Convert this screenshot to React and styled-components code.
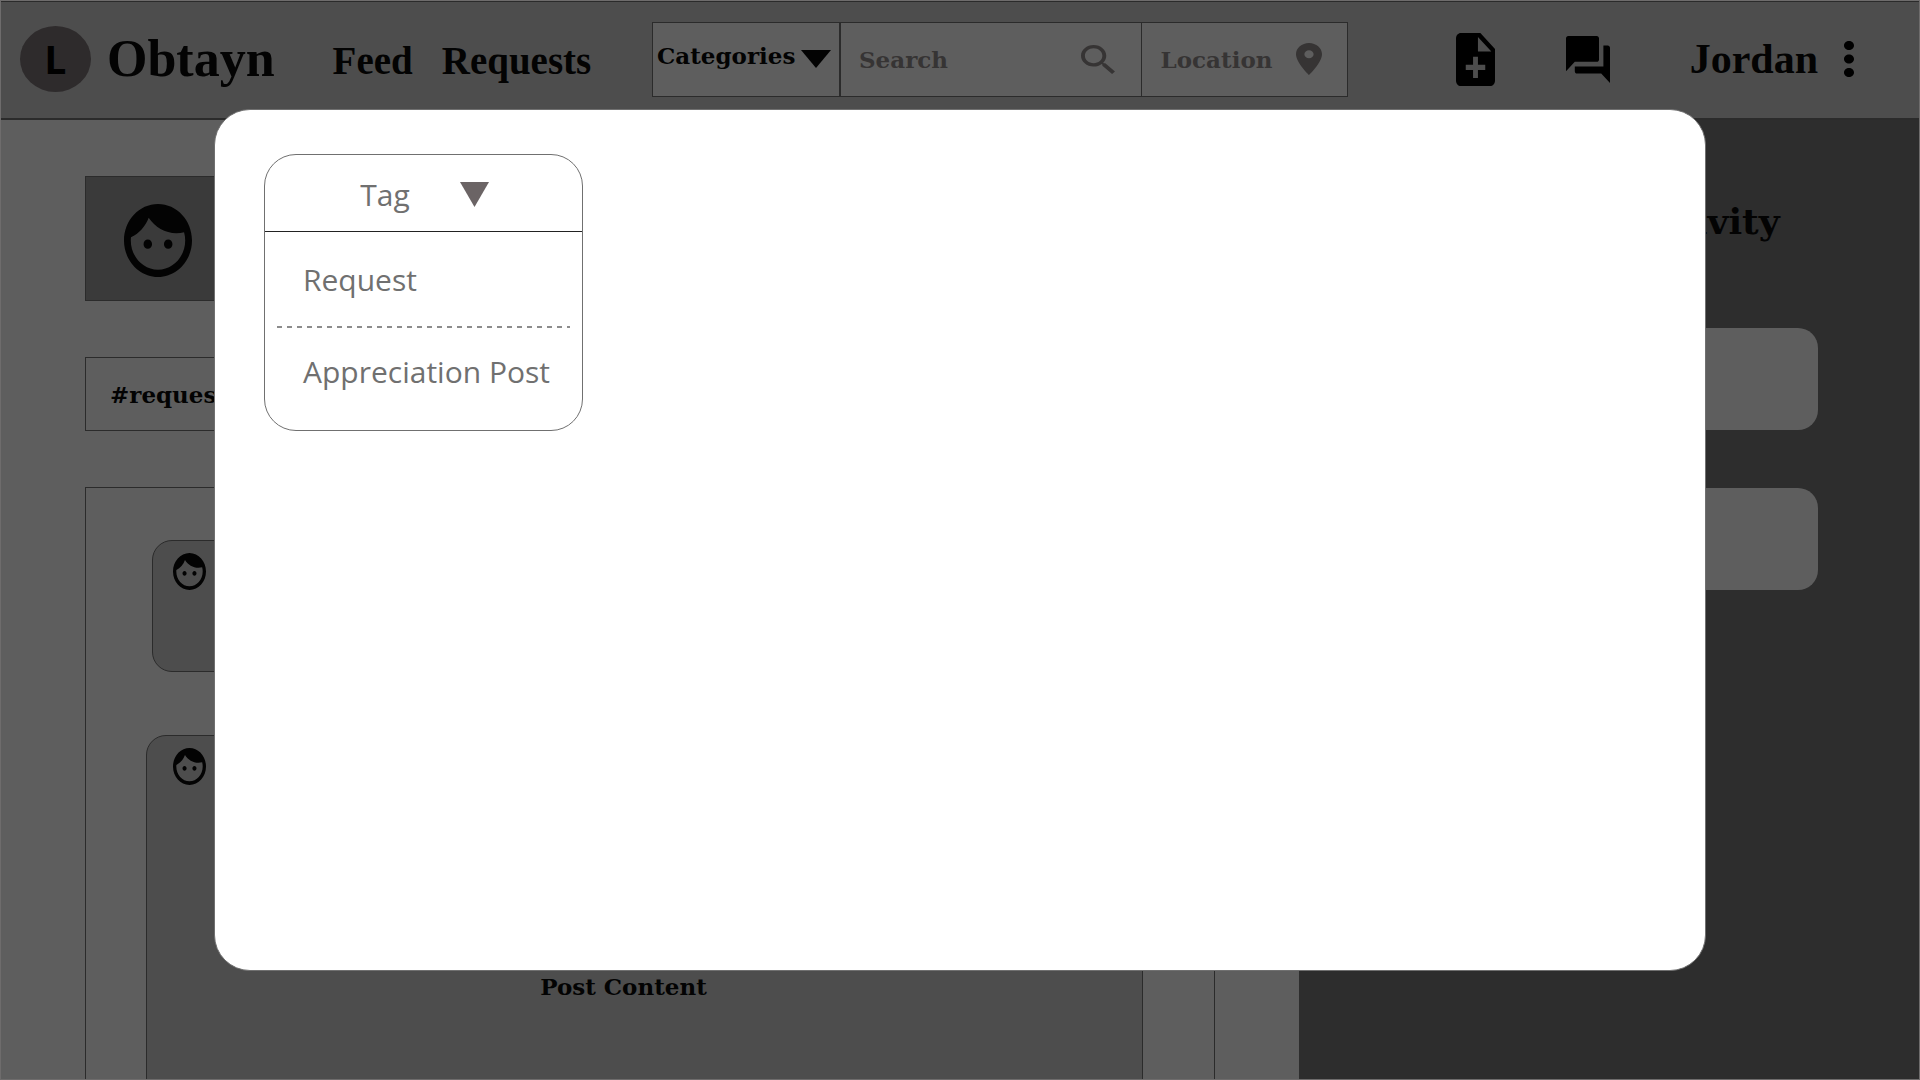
import React from "react";
import styled, { createGlobalStyle } from "styled-components";

const ink = "#030303";
const line = "#2b2b2b";
const muted = "#363434";
const surface = "#5e5e5e";
const raised = "#4d4d4d";
const slab = '"DejaVu Serif", serif';
const serif = '"Liberation Serif", serif';

const GlobalStyle = createGlobalStyle`
  * { box-sizing: border-box; }
  body { margin: 0; background: ${surface}; }
  button, input, select { font: inherit; color: inherit; background: none; border: 0; padding: 0; margin: 0; }
  button { cursor: pointer; }
  h1, h2, p, ul { margin: 0; padding: 0; font-weight: inherit; }
  a { color: inherit; text-decoration: none; }
  svg { display: block; flex: none; }
`;

const Frame = styled.div`
  height: 100vh;
  display: flex;
  flex-direction: column;
  overflow: hidden;
  border: 1px solid #6e6c6c;
  background: ${surface};
  color: ${ink};
  font: bold 23px/30px ${slab};
`;

const Header = styled.header`
  flex: none;
  height: 119px;
  display: grid;
  grid-template-columns: 632px minmax(0, 1fr) auto;
  align-items: center;
  padding: 0 65px 2px 19px;
  background: ${raised};
  border-top: 1px solid ${line};
  border-bottom: 2px solid ${line};
  font-family: ${serif};
`;

const Left = styled.div`
  display: flex;
  align-items: center;
`;

const Brand = styled.a`
  display: flex;
  align-items: center;
  gap: 16px;
  font-size: 52px;
  line-height: 60px;
`;

const Logo = styled.span`
  width: 71px;
  height: 66px;
  display: grid;
  place-items: center;
  border-radius: 50%;
  background: #2e2b2c;
  color: #000;
  font: bold 39px/48px "Noto Sans", sans-serif;
`;

const Nav = styled.nav`
  display: flex;
  gap: 29px;
  margin-left: 58px;
  padding-top: 4px;
  font-size: 39px;
  line-height: 48px;
`;

const SearchBar = styled.form`
  display: grid;
  grid-template-columns: 186px minmax(0, 303fr) minmax(0, 207fr);
  height: 75px;
  border: 1px solid ${line};
  background: ${surface};
  font: bold 23px/30px ${slab};
`;

const Field = styled.label`
  display: flex;
  align-items: center;
  min-width: 0;
  padding: 0 ${(p) => p.$right}px 0 ${(p) => p.$left}px;
  border-left: ${(p) => p.$divider || 0}px solid ${line};
  color: ${(p) => (p.$strong ? ink : muted)};
`;

const Select = styled.select`
  appearance: none;
  flex: 1;
  min-width: 0;
  height: 40px;
  padding-bottom: 6px;
`;

const TextInput = styled.input`
  flex: 1;
  min-width: 0;
  width: 100%;
  height: 40px;
  outline: 0;
  &::placeholder { color: ${muted}; opacity: 1; }
`;

const Actions = styled.div`
  display: flex;
  align-items: center;
  padding-left: 108px;
`;

const IconButton = styled.button`
  color: #000;
  margin-right: ${(p) => p.$after || 0}px;
`;

const UserName = styled.span`
  margin-right: 26px;
  font-size: 42px;
  line-height: 48px;
`;

const Columns = styled.div`
  flex: 1;
  min-height: 0;
  display: grid;
  grid-template-columns: minmax(0, 1298fr) minmax(0, 620fr);
`;

const Main = styled.main`
  display: flex;
  flex-direction: column;
  min-height: 0;
  padding: 56px 84px 0;
`;

const Profile = styled.section`
  flex: none;
  height: 125px;
  display: flex;
  align-items: center;
  padding: 3px 0 0 38px;
  border: 1px solid ${line};
  background: #3a3a3a;
`;

const TagBox = styled.section`
  flex: none;
  height: 74px;
  display: flex;
  align-items: center;
  margin-top: 56px;
  padding: 2px 0 0 24px;
  border: 1px solid ${line};
`;

const Feed = styled.section`
  flex: 1;
  min-height: 0;
  overflow: hidden;
  margin-top: 56px;
  padding: 52px 71px 0 60px;
  border: 1px solid ${line};
  border-bottom: 0;
`;

const Post = styled.article`
  min-height: ${(p) => p.$height}px;
  margin: 0 0 63px ${(p) => p.$indent}px;
  padding: 12px 20px 12px ${(p) => 26 - p.$indent}px;
  border: 1px solid ${line};
  border-radius: 20px;
  background: ${raised};
`;

const PostBody = styled.p`
  height: 404px;
  display: grid;
  place-items: center;
  padding-right: 48px;
`;

const Sidebar = styled.aside`
  display: flex;
  flex-direction: column;
  gap: 58px;
  padding: 79px 101px 0;
  background: #2d2d2d;
`;

const SidebarTitle = styled.h2`
  margin-bottom: 27px;
  padding-left: 36px;
  font-size: 36px;
  line-height: 44px;
  text-align: center;
  white-space: nowrap;
`;

const ActivityCard = styled.div`
  height: 102px;
  border-radius: 20px;
  background: ${surface};
`;

const Overlay = styled.div`
  position: fixed;
  inset: 0;
  display: flex;
  padding: 109px 214px;
`;

const Dialog = styled.section`
  flex: 1;
  padding: 44px 49px;
  border: 1px solid #707070;
  border-radius: 36px;
  background: #fff;
  color: #707070;
  font: 30px/40px "Open Sans", sans-serif;
`;

const TagMenu = styled.div`
  width: 319px;
  border: 1px solid #707070;
  border-radius: 32px;
`;

const TagToggle = styled.button`
  width: 100%;
  height: 77px;
  display: flex;
  align-items: center;
  justify-content: center;
  gap: 50px;
  padding: 3px 0 0 2px;
  border-bottom: 1px solid #222;
  color: #707070;
`;

const Options = styled.ul`
  list-style: none;
  padding: 2px 12px 12px;
`;

const Option = styled.li`
  & + & {
    background: repeating-linear-gradient(90deg, #8c8c8c 0 5px, transparent 5px 10px) 0 0 / 100% 2px no-repeat;
  }
`;

const OptionButton = styled.button`
  width: 100%;
  height: 92px;
  padding-left: 26px;
  text-align: left;
  white-space: nowrap;
`;

function Glyph({ box, width, height, d }) {
  return (
    <svg width={width} height={height} viewBox={box} preserveAspectRatio="none" fill="currentColor" aria-hidden="true">
      <path d={d} />
    </svg>
  );
}

function Face({ width, height }) {
  return (
    <Glyph
      box="2 2 20 20"
      width={width}
      height={height}
      d="M9 11.75c-.69 0-1.25.56-1.25 1.25s.56 1.25 1.25 1.25 1.25-.56 1.25-1.25-.56-1.25-1.25-1.25zm6 0c-.69 0-1.25.56-1.25 1.25s.56 1.25 1.25 1.25 1.25-.56 1.25-1.25-.56-1.25-1.25-1.25zM12 2C6.48 2 2 6.48 2 12s4.48 10 10 10 10-4.48 10-10S17.52 2 12 2zm0 18c-4.41 0-8-3.59-8-8 0-.29.02-.58.05-.86 2.36-1.05 4.23-2.98 5.21-5.37C11.07 8.33 14.05 10 17.42 10c.78 0 1.53-.09 2.25-.26.21.71.33 1.47.33 2.26 0 4.41-3.59 8-8 8z"
    />
  );
}

export default function App() {
  const [open, setOpen] = React.useState(true);
  return (
    <>
      <GlobalStyle />
      <Frame>
        <Header>
          <Left>
            <Brand href="#home">
              <Logo>L</Logo>
              Obtayn
            </Brand>
            <Nav>
              <a href="#feed">Feed</a>
              <a href="#requests">Requests</a>
            </Nav>
          </Left>
          <SearchBar>
            <Field $left={4} $right={8} $strong>
              <Select aria-label="Categories">
                <option>Categories</option>
              </Select>
              <Glyph box="0 0 30 18" width={30} height={18} d="M0 0H30L15 18Z" />
            </Field>
            <Field $left={18} $right={26} $divider={2}>
              <TextInput aria-label="Search" placeholder="Search" />
              <Glyph
                box="3 3 17.5 17.5"
                width={34}
                height={29}
                d="M15.5 14h-.79l-.28-.27C15.41 12.59 16 11.11 16 9.5 16 5.91 13.09 3 9.5 3S3 5.91 3 9.5 5.91 16 9.5 16c1.61 0 3.09-.59 4.23-1.57l.27.28v.79l5 4.99L20.49 19l-4.99-5zm-6 0C7.01 14 5 11.99 5 9.5S7.01 5 9.5 5 14 7.01 14 9.5 11.99 14 9.5 14z"
              />
            </Field>
            <Field $left={19} $right={25} $divider={1}>
              <TextInput aria-label="Location" placeholder="Location" />
              <Glyph
                box="5 2 14 20"
                width={26}
                height={32}
                d="M12 2C8.13 2 5 5.13 5 9c0 5.25 7 13 7 13s7-7.75 7-13c0-3.87-3.13-7-7-7zm0 9.5c-1.38 0-2.5-1.12-2.5-2.5s1.12-2.5 2.5-2.5 2.5 1.12 2.5 2.5-1.12 2.5-2.5 2.5z"
              />
            </Field>
          </SearchBar>
          <Actions>
            <IconButton aria-label="New post" $after={71}>
              <Glyph
                box="4 2 16 20"
                width={39}
                height={53}
                d="M14 2H6c-1.1 0-1.99.9-1.99 2L4 20c0 1.1.89 2 1.99 2H18c1.1 0 2-.9 2-2V8l-6-6zm2 14h-3v3h-2v-3H8v-2h3v-3h2v3h3v2zm-3-7V3.5L18.5 9H13z"
              />
            </IconButton>
            <IconButton aria-label="Messages" $after={80}>
              <Glyph
                box="2 2 20 20"
                width={44}
                height={47}
                d="M21 6h-2v9H6v2c0 .55.45 1 1 1h11l4 4V7c0-.55-.45-1-1-1zm-4 6V3c0-.55-.45-1-1-1H3c-.55 0-1 .45-1 1v14l4-4h10c.55 0 1-.45 1-1z"
              />
            </IconButton>
            <UserName>Jordan</UserName>
            <IconButton aria-label="Account menu">
              <Glyph
                box="10 4 4 16"
                width={10}
                height={36}
                d="M12 8c1.1 0 2-.9 2-2s-.9-2-2-2-2 .9-2 2 .9 2 2 2zm0 2c-1.1 0-2 .9-2 2s.9 2 2 2 2-.9 2-2-.9-2-2-2zm0 6c-1.1 0-2 .9-2 2s.9 2 2 2 2-.9 2-2-.9-2-2-2z"
              />
            </IconButton>
          </Actions>
        </Header>
        <Columns>
          <Main>
            <Profile>
              <Face width={68} height={73} />
            </Profile>
            <TagBox>#request</TagBox>
            <Feed>
              <Post $indent={6} $height={132}>
                <Face width={33} height={37} />
              </Post>
              <Post $indent={0} $height={500}>
                <Face width={33} height={37} />
                <PostBody>Post Content</PostBody>
              </Post>
            </Feed>
          </Main>
          <Sidebar>
            <SidebarTitle>Recent Activity</SidebarTitle>
            <ActivityCard />
            <ActivityCard />
          </Sidebar>
        </Columns>
      </Frame>
      <Overlay>
        <Dialog role="dialog" aria-label="New post">
          <TagMenu>
            <TagToggle aria-expanded={open} onClick={() => setOpen(!open)}>
              Tag
              <svg width="29" height="25" viewBox="0 0 29 25" fill="#6b6465" aria-hidden="true">
                <path d="M0 0H29L14.5 25Z" />
              </svg>
            </TagToggle>
            {open && (
              <Options>
                <Option>
                  <OptionButton>Request</OptionButton>
                </Option>
                <Option>
                  <OptionButton>Appreciation Post</OptionButton>
                </Option>
              </Options>
            )}
          </TagMenu>
        </Dialog>
      </Overlay>
    </>
  );
}
